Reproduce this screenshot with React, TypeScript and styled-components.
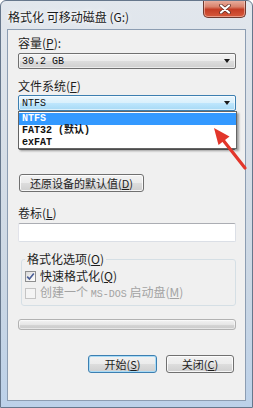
import styled, { createGlobalStyle } from "styled-components";

const GlobalStyle = createGlobalStyle`
  html, body {
    margin: 0;
    padding: 0;
    background: #ffffff;
  }
  * {
    box-sizing: border-box;
  }
`;

const CJK = `"Noto Sans CJK SC", "Noto Sans", sans-serif`;
const MONO = `"Liberation Mono", "Noto Sans CJK SC", monospace`;

const Window = styled.div`
  position: relative;
  width: 253px;
  height: 408px;
  display: flex;
  flex-direction: column;
  border: 1px solid #66778c;
  border-radius: 6px 6px 0 0;
  background: linear-gradient(
    180deg,
    #e2e7ed 0%,
    #d9e0e8 30%,
    #cbd7e4 70%,
    #bcd1e9 100%
  );
  font-family: ${CJK};
  overflow: hidden;
`;

const TitleBar = styled.div`
  height: 28px;
  display: flex;
  justify-content: space-between;
  align-items: flex-start;
  padding-left: 7px;
  padding-right: 6px;
`;

const Title = styled.div`
  margin-top: 8px;
  font-size: 12px;
  line-height: 15px;
  color: #1b1b1b;
  text-shadow: 0 0 6px #ffffff, 0 0 3px #ffffff;
  white-space: nowrap;
`;

const CloseButton = styled.div`
  width: 43px;
  height: 18px;
  margin-top: -1px;
  display: flex;
  align-items: center;
  justify-content: center;
  border: 1px solid #6e3a30;
  border-top: none;
  border-radius: 0 0 5px 5px;
  background: linear-gradient(
    180deg,
    #eab3a4 0%,
    #d9826c 40%,
    #c43d25 55%,
    #d65a3c 100%
  );
  box-shadow: inset 0 0 0 1px rgba(255, 220, 210, 0.5);
`;

const Client = styled.div`
  flex: 1;
  margin: 0 6px 6px 6px;
  background: #f0f0f0;
  border: 1px solid #8c9db2;
  display: flex;
  flex-direction: column;
  padding: 0 9px 0 10px;
`;

const Label = styled.div<{ $top: number }>`
  margin-top: ${(p) => p.$top}px;
  height: 16px;
  font-size: 12px;
  line-height: 16px;
  color: #1e1e1e;
  white-space: nowrap;
`;

const Key = styled.span`
  text-decoration: underline;
  text-underline-offset: 1px;
`;

const Combo = styled.div<{ $top: number; $hot?: boolean }>`
  margin-top: ${(p) => p.$top}px;
  height: 16px;
  display: flex;
  align-items: center;
  justify-content: space-between;
  padding: 0 5px 0 3px;
  border: 1px solid ${(p) => (p.$hot ? "#3c7fb1" : "#707070")};
  border-radius: 2px;
  background: ${(p) =>
    p.$hot
      ? "linear-gradient(180deg, #eaf6fd 0%, #d9f0fc 50%, #bee6fd 51%, #a7d9f5 100%)"
      : "linear-gradient(180deg, #f2f2f2 0%, #ebebeb 50%, #dddddd 51%, #cfcfcf 100%)"};
  box-shadow: inset 0 0 0 1px rgba(255, 255, 255, 0.6);
  font-family: ${MONO};
  font-size: 10px;
  color: #111;
`;

const DropArrow = styled.span`
  width: 0;
  height: 0;
  margin-left: auto;
  border-left: 3.5px solid transparent;
  border-right: 3.5px solid transparent;
  border-top: 4px solid #1a1a1a;
`;

const DropArea = styled.div`
  position: relative;
  display: flex;
  flex-direction: column;
`;

const DropList = styled.div`
  position: absolute;
  top: 0;
  left: 0;
  right: -1px;
  height: 38px;
  background: #ffffff;
  border: 1px solid #646464;
  box-shadow: 2px 2px 2px rgba(0, 0, 0, 0.35);
  display: flex;
  flex-direction: column;
  padding-top: 1px;
  z-index: 2;
`;

const DropItem = styled.div<{ $selected?: boolean }>`
  height: 12px;
  line-height: 12px;
  padding-left: 3px;
  font-family: ${MONO};
  font-size: 10px;
  font-weight: bold;
  color: ${(p) => (p.$selected ? "#ffffff" : "#111111")};
  background: ${(p) => (p.$selected ? "#3399ff" : "transparent")};
  white-space: nowrap;
`;

const Button = styled.div<{ $top?: number; $width: number; $default?: boolean }>`
  margin-top: ${(p) => p.$top ?? 0}px;
  width: ${(p) => p.$width}px;
  height: 18px;
  display: flex;
  align-items: center;
  justify-content: center;
  border: 1px solid ${(p) => (p.$default ? "#3c7fb1" : "#707070")};
  border-radius: 3px;
  background: linear-gradient(
    180deg,
    #f2f2f2 0%,
    #ebebeb 50%,
    #dddddd 51%,
    #cfcfcf 100%
  );
  box-shadow: inset 0 0 0 1px
    ${(p) => (p.$default ? "#a9dbf6" : "rgba(255, 255, 255, 0.8)")};
  font-size: 11px;
  color: #1e1e1e;
  white-space: nowrap;
`;

const ResetButton = styled(Button)`
  margin-left: 1px;
`;

const TextBox = styled.div`
  margin-top: 2px;
  height: 19px;
  background: #ffffff;
  border: 1px solid #dbdfe6;
  border-top-color: #abadb3;
  border-left-color: #e2e3ea;
  border-radius: 2px;
`;

const Group = styled.fieldset`
  margin: 11px 0 0 3px;
  padding: 4px 4px 5px 3px;
  border: 1px solid #d5dfe5;
  border-radius: 3px;
  display: flex;
  flex-direction: column;
  gap: 3px;
`;

const Legend = styled.legend`
  padding: 0 2px;
  font-size: 12px;
  line-height: 12px;
  color: #1e1e1e;
`;

const CheckRow = styled.div<{ $disabled?: boolean }>`
  height: 14px;
  display: flex;
  align-items: center;
  gap: 4px;
  font-size: 12px;
  line-height: 14px;
  color: ${(p) => (p.$disabled ? "#a3a3a3" : "#1e1e1e")};
  white-space: nowrap;
`;

const CheckBox = styled.div<{ $disabled?: boolean }>`
  width: 11px;
  height: 11px;
  flex-shrink: 0;
  display: flex;
  align-items: center;
  justify-content: center;
  border: 1px solid ${(p) => (p.$disabled ? "#c4c4c4" : "#8e8f8f")};
  background: ${(p) =>
    p.$disabled
      ? "#f4f4f4"
      : "linear-gradient(135deg, #d7d7d7 0%, #f4f4f4 60%, #ffffff 100%)"};
`;

const MonoText = styled.span`
  font-family: ${MONO};
  font-size: 10px;
`;

const Progress = styled.div`
  margin-top: 13px;
  height: 11px;
  border: 1px solid #b2b2b2;
  border-radius: 3px;
  background: linear-gradient(
    180deg,
    #f3f3f3 0%,
    #e6e6e6 50%,
    #d6d6d6 51%,
    #cacaca 100%
  );
  box-shadow: inset 0 0 0 1px rgba(255, 255, 255, 0.5);
`;

const ButtonRow = styled.div`
  margin-top: 25px;
  display: flex;
  justify-content: flex-end;
  gap: 9px;
  padding-right: 2px;
`;

const ArrowOverlay = styled.svg`
  position: absolute;
  left: 0;
  top: 0;
  pointer-events: none;
  z-index: 5;
`;

export default function App() {
  return (
    <>
      <GlobalStyle />
      <Window>
        <TitleBar>
          <Title>格式化 可移动磁盘 (G:)</Title>
          <CloseButton>
            <svg width="12" height="10" viewBox="0 0 12 10">
              <path
                d="M2 1.5 L10 8.5 M10 1.5 L2 8.5"
                stroke="#5a2a22"
                strokeWidth="3.6"
                strokeLinecap="round"
              />
              <path
                d="M2 1.5 L10 8.5 M10 1.5 L2 8.5"
                stroke="#ffffff"
                strokeWidth="2.2"
                strokeLinecap="round"
              />
            </svg>
          </CloseButton>
        </TitleBar>
        <Client>
          <Label $top={5}>
            容量(<Key>P</Key>):
          </Label>
          <Combo $top={2}>
            <span>30.2 GB</span>
            <DropArrow />
          </Combo>
          <Label $top={9}>
            文件系统(<Key>F</Key>)
          </Label>
          <Combo $top={1} $hot>
            <span>NTFS</span>
            <DropArrow />
          </Combo>
          <DropArea>
            <DropList>
              <DropItem $selected>NTFS</DropItem>
              <DropItem>FAT32 (默认)</DropItem>
              <DropItem>exFAT</DropItem>
            </DropList>
            {/* allocation-unit row, covered by the open list */}
            <Label $top={5} />
            <Combo $top={2}>
              <DropArrow />
            </Combo>
          </DropArea>
          <ResetButton $top={24} $width={125}>
            还原设备的默认值(<Key>D</Key>)
          </ResetButton>
          <Label $top={13}>
            卷标(<Key>L</Key>)
          </Label>
          <TextBox />
          <Group>
            <Legend>
              格式化选项(<Key>O</Key>)
            </Legend>
            <CheckRow>
              <CheckBox>
                <svg width="9" height="9" viewBox="0 0 9 9">
                  <path
                    d="M1.2 4.6 L3.4 7 L7.8 1.4"
                    fill="none"
                    stroke="#4a5e96"
                    strokeWidth="1.6"
                  />
                </svg>
              </CheckBox>
              <span>
                快速格式化(<Key>Q</Key>)
              </span>
            </CheckRow>
            <CheckRow $disabled>
              <CheckBox $disabled />
              <span>
                创建一个 <MonoText>MS-DOS</MonoText> 启动盘(<Key>M</Key>)
              </span>
            </CheckRow>
          </Group>
          <Progress />
          <ButtonRow>
            <Button $width={69} $default>
              开始(<Key>S</Key>)
            </Button>
            <Button $width={68}>
              关闭(<Key>C</Key>)
            </Button>
          </ButtonRow>
        </Client>
        <ArrowOverlay width="253" height="408" viewBox="0 0 253 408">
          <line
            x1="244"
            y1="167"
            x2="222"
            y2="139"
            stroke="#e2362b"
            strokeWidth="3.2"
            strokeLinecap="round"
          />
          <polygon points="213,127 217.5,144 228.5,135.5" fill="#e2362b" />
        </ArrowOverlay>
      </Window>
    </>
  );
}
